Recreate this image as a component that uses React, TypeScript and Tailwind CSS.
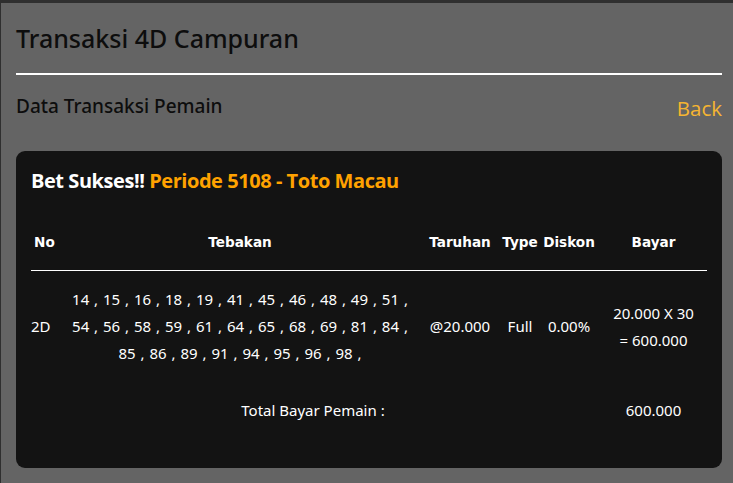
const numbers = [
  14, 15, 16, 18, 19, 41, 45, 46, 48, 49, 51,
  54, 56, 58, 59, 61, 64, 65, 68, 69, 81, 84,
  85, 86, 89, 91, 94, 95, 96, 98,
];

const lines = [numbers.slice(0, 11), numbers.slice(11, 22), numbers.slice(22)];

const cols = "grid grid-cols-[31px_356px_84px_36px_62px_1fr]";

export default function App() {
  return (
    <div className="min-h-[483px] bg-[#646464] border-t-[3px] border-l border-[#2f2f2f] pl-[15px] pr-[11px] font-['Noto_Sans',sans-serif]">
      <h1 className="pt-[17px] pb-[17px] text-[25px] font-medium leading-[36px] text-[#0d0d0d]">Transaksi 4D Campuran</h1>
      <div className="h-[2px] bg-white" />
      <div className="flex items-start justify-between pt-[18px]">
        <h2 className="text-[19px] font-medium leading-[26px] text-[#0d0d0d]">Data Transaksi Pemain</h2>
        <a className="mt-[1px] font-['Open_Sans',sans-serif] text-[20.5px] leading-[28px] text-[#f6b531]">Back</a>
      </div>

      <div className="mt-[29px] rounded-[9px] bg-[#131313] px-[15px] pt-[16px] pb-[44px]">
        <p className="font-['Open_Sans',sans-serif] text-[20px] font-bold leading-[28px] tracking-[-0.45px] text-white">
          Bet Sukses!! <span className="text-[#ffa200]">Periode 5108 - Toto Macau</span>
        </p>

        <div className="mt-[37px] font-['DejaVu_Sans',sans-serif] text-[13.6px] text-white">
          <div className={`${cols} border-b border-white pb-[18px] font-bold`}>
            <span className="pl-[3px]">No</span>
            <span className="text-center">Tebakan</span>
            <span className="text-center">Taruhan</span>
            <span className="text-center whitespace-nowrap">Type</span>
            <span className="text-center">Diskon</span>
            <span className="text-center">Bayar</span>
          </div>

          <div className={`${cols} items-center pt-[15px] font-['Noto_Sans',sans-serif] text-[15px] leading-[27px]`}>
            <span>2D</span>
            <div className="text-center [word-spacing:1px]">
              {lines.map((line, i) => (
                <div key={i}>{line.map((n) => `${n} , `).join("")}</div>
              ))}
            </div>
            <span className="text-center">@20.000</span>
            <span className="text-center">Full</span>
            <span className="text-center">0.00%</span>
            <div className="text-center">
              <div>20.000 X 30</div>
              <div>= 600.000</div>
            </div>
          </div>

          <div className={`${cols} mt-[30px] font-['Noto_Sans',sans-serif] text-[15px] leading-[27px]`}>
            <span />
            <span className="col-span-4 text-center pr-[36px]">Total Bayar Pemain :</span>
            <span className="text-center">600.000</span>
          </div>
        </div>
      </div>
    </div>
  );
}
